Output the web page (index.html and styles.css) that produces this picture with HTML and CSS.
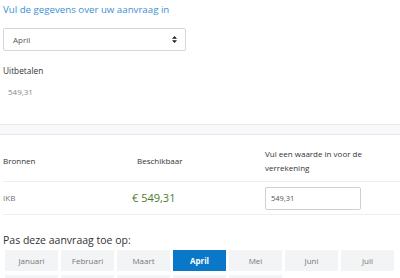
FILE: index.html
```html
<!DOCTYPE html>
<html lang="nl">
<head>
  <meta charset="UTF-8" />
  <meta name="viewport" content="width=device-width, initial-scale=1.0" />
  <title>Aanvraag</title>
  <link rel="stylesheet" href="styles.css">
</head>
<body>

  <div class="form-top">
    <h2 class="title">Vul de gegevens over uw aanvraag in</h2>

    <div class="select-box">
      <span>April</span>
      <svg class="select-arrows" width="5" height="7" viewBox="0 0 5 7">
        <path d="M2.5 0 L5 2.8 L0 2.8 Z M2.5 7 L5 4.2 L0 4.2 Z" fill="#222"/>
      </svg>
    </div>

    <div class="label">Uitbetalen</div>
    <div class="value">549,31</div>
  </div>

  <div class="band"></div>

  <div class="sources">
    <div class="row head">
      <div class="cell">Bronnen</div>
      <div class="cell">Beschikbaar</div>
      <div class="cell">Vul een waarde in voor de verrekening</div>
    </div>
    <div class="row">
      <div class="cell muted">IKB</div>
      <div class="cell amount">€ 549,31</div>
      <div class="cell"><input class="amount-input" type="text" value="549,31" /></div>
    </div>
  </div>

  <div class="apply">
    <div class="apply-title">Pas deze aanvraag toe op:</div>
    <div class="months">
      <button class="month">Januari</button>
      <button class="month">Februari</button>
      <button class="month">Maart</button>
      <button class="month active">April</button>
      <button class="month">Mei</button>
      <button class="month">Juni</button>
      <button class="month">Juli</button>
      <button class="month">Augustus</button>
      <button class="month">September</button>
      <button class="month">Oktober</button>
      <button class="month">November</button>
      <button class="month">December</button>
    </div>
  </div>

</body>
</html>
```

FILE: styles.css
```css
body {
  margin: 0;
  font-family: "Open Sans", "Liberation Sans", sans-serif;
  color: #333;
  background: #fff;
}

.form-top {
  padding: 0 3px;
}

.title {
  margin: 0;
  padding-top: 1px;
  font-size: 9.7px;
  font-weight: normal;
  line-height: 18px;
  color: #3b8fd6;
}

.select-box {
  width: 164px;
  height: 21px;
  margin-top: 9px;
  padding: 0 8px 0 9px;
  border: 1px solid #d3d6da;
  border-radius: 2px;
  display: flex;
  align-items: center;
  justify-content: space-between;
  font-size: 8px;
  color: #555;
}

.label {
  margin-top: 13px;
  font-size: 8.3px;
  line-height: 14px;
  color: #333;
}

.value {
  margin-top: 7px;
  padding-left: 5px;
  font-size: 8px;
  line-height: 14px;
  color: #888;
}

.band {
  margin-top: 25px;
  height: 9px;
  background: #f7f8fa;
  border-top: 1px solid #e6e8eb;
  border-bottom: 1px solid #e6e8eb;
}

.sources {
  padding-left: 3px;
}

.row {
  display: grid;
  grid-template-columns: 134px 128px 1fr;
  align-items: center;
  border-bottom: 1px solid #eceef0;
  font-size: 8px;
}

.row .cell {
  line-height: 14px;
}

.row.head {
  box-sizing: border-box;
  height: 47px;
  padding-top: 6px;
}

.row.head .cell:last-child {
  width: 104px;
}

.row:not(.head) {
  height: 32px;
}

.muted {
  color: #777;
}

.amount {
  margin-left: -5px;
  font-size: 11px;
  color: #4b7a1f;
}

.amount-input {
  width: 96px;
  height: 23px;
  box-sizing: border-box;
  padding: 0 5px;
  border: 1px solid #ccd0d4;
  border-radius: 2px;
  font-family: inherit;
  font-size: 7.5px;
  color: #555;
}

.apply {
  padding: 0 3px;
}

.apply-title {
  margin-top: 17px;
  font-size: 10.5px;
  line-height: 16px;
  color: #333;
}

.months {
  margin-top: 2px;
  padding-left: 2px;
  display: grid;
  grid-template-columns: repeat(7, 53px);
  column-gap: 3px;
  row-gap: 4px;
}

.month {
  height: 21px;
  padding: 0;
  border: none;
  border-radius: 0;
  background: #f3f4f6;
  font-family: inherit;
  font-size: 8px;
  color: #777;
}

.month.active {
  background: #0a78c8;
  color: #fff;
  font-weight: bold;
}
```
